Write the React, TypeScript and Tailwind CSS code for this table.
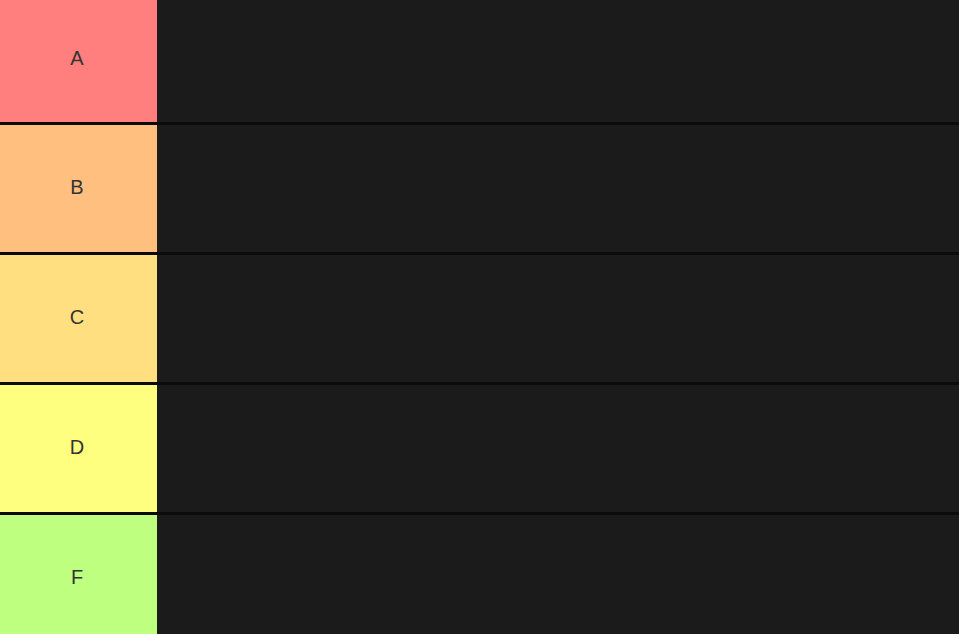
const tiers = [
  { label: 'A', bg: 'bg-[#ff7f7f]', h: 'h-[122px] pb-[6px]' },
  { label: 'B', bg: 'bg-[#ffbf7f]', h: 'h-[127px] pb-[3px]' },
  { label: 'C', bg: 'bg-[#ffdf7f]', h: 'h-[127px] pb-[3px]' },
  { label: 'D', bg: 'bg-[#ffff7f]', h: 'h-[127px] pb-[3px]' },
  { label: 'F', bg: 'bg-[#bfff7f]', h: 'h-[127px] pb-[3px]' },
];

export default function App() {
  return (
    <div className="h-screen w-full overflow-hidden bg-[#1a1a1a] font-['Liberation_Sans',Arial,sans-serif]">
      {tiers.map((t) => (
        <div key={t.label} className="flex border-b-[3px] border-[#0b0b0b]">
          <div
            className={`${t.bg} ${t.h} w-[157px] shrink-0 flex items-center justify-center pr-[3px] text-[20px] text-[#333]`}
          >
            {t.label}
          </div>
          <div className="flex-1 bg-[#1b1b1b]" />
        </div>
      ))}
    </div>
  );
}
